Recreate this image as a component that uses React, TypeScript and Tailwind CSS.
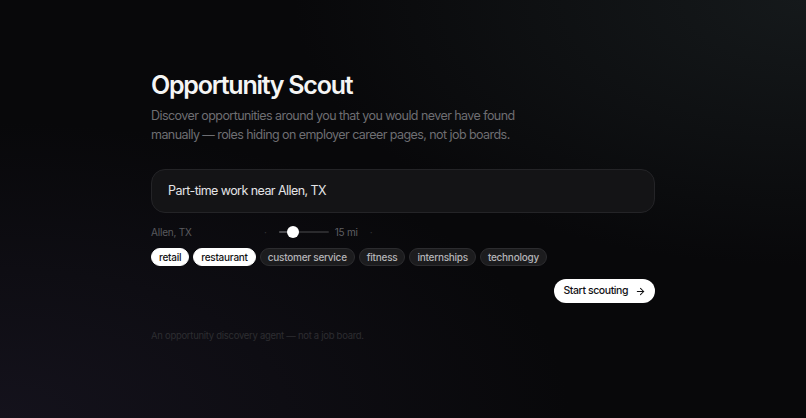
import React, { useState } from 'react';
import { ArrowRight } from 'lucide-react';

const TAGS = ['retail', 'restaurant', 'customer service', 'fitness', 'internships', 'technology'];

export default function App() {
  const [query, setQuery] = useState('Part-time work near Allen, TX');
  const [selected, setSelected] = useState<string[]>(['retail', 'restaurant']);

  const toggle = (tag: string) => {
    setSelected((s) => (s.includes(tag) ? s.filter((t) => t !== tag) : [...s, tag]));
  };

  return (
    <div
      className="min-h-[418px] w-full bg-[#08080a] bg-[radial-gradient(ellipse_at_100%_0%,#15191b_0%,transparent_45%),radial-gradient(ellipse_at_0%_100%,#14121c_0%,transparent_50%)] text-white"
      style={{ fontFamily: 'Inter, "Noto Sans", sans-serif' }}
    >
      <div className="mx-auto w-[504px] pt-[70px]">
        {/* Heading */}
        <h1 className="text-[25px] font-semibold leading-[30px] tracking-[-0.05em] text-[#f5f5f5]">
          Opportunity Scout
        </h1>
        <p className="mt-[6px] w-[380px] text-[12.5px] leading-[19px] tracking-[-0.045em] text-[#6e6e72]">
          Discover opportunities around you that you would never have found manually — roles hiding on employer career pages, not job boards.
        </p>

        {/* Query input */}
        <div className="mt-[25px] flex h-[44px] items-center rounded-[14px] border border-[#242427] bg-[#141416] px-[16px]">
          <input
            value={query}
            onChange={(e) => setQuery(e.target.value)}
            className="w-full bg-transparent text-[12.5px] tracking-[-0.045em] text-[#e4e4e6] outline-none"
          />
        </div>

        {/* Location + radius */}
        <div className="mt-[12px] flex h-[14px] items-center text-[10px] tracking-[-0.02em] text-[#5a5a5e]">
          <span className="w-[113px]">Allen, TX</span>
          <span className="text-[#333336]">·</span>
          <div className="relative ml-[12px] h-[2px] w-[50px] rounded-full bg-[#2a2a2d]">
            <div className="absolute left-0 top-0 h-[2px] w-[13px] rounded-full bg-[#4a4a4e]" />
            <div className="absolute left-[8px] top-[-5px] h-[12px] w-[12px] rounded-full bg-white" />
          </div>
          <span className="ml-[6px] text-[#5f5f63]">15 mi</span>
          <span className="ml-[12px] text-[#333336]">·</span>
        </div>

        {/* Tags */}
        <div className="mt-[9px] flex flex-wrap gap-[4px]">
          {TAGS.map((tag) => {
            const on = selected.includes(tag);
            return (
              <button
                key={tag}
                onClick={() => toggle(tag)}
                className={`h-[18px] rounded-full border px-[7px] text-[10px] font-medium leading-none tracking-[-0.025em] ${
                  on
                    ? 'border-white bg-white text-[#111113]'
                    : 'border-[#2c2c2f] bg-[#1c1c1e] text-[#b4b4b8]'
                }`}
              >
                {tag}
              </button>
            );
          })}
        </div>

        {/* Action */}
        <div className="mt-[13px] flex justify-end">
          <button className="flex h-[24px] items-center gap-[7px] rounded-full bg-white px-[9px] text-[10.5px] font-medium tracking-[-0.04em] text-[#111113]">
            Start scouting
            <ArrowRight size={11} strokeWidth={2.2} />
          </button>
        </div>

        <p className="mt-[26px] text-[9.5px] tracking-[-0.03em] text-[#2d2d31]">
          An opportunity discovery agent — not a job board.
        </p>
      </div>
    </div>
  );
}
